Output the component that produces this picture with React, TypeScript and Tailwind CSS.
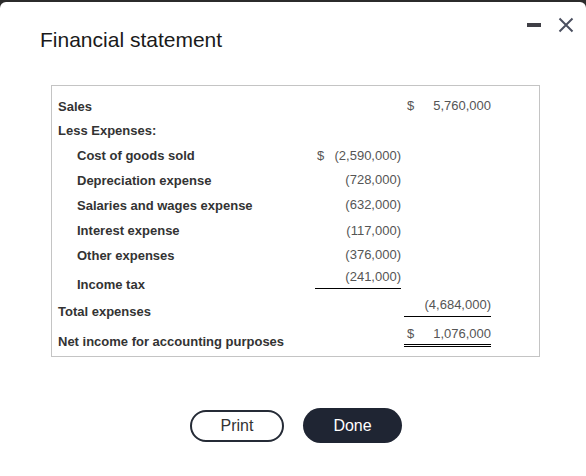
import React from "react";

type Row = {
  label: string;
  indent?: boolean;
  h: number;
  labelPt: number;
  c1?: React.ReactNode;
  c1Pt?: number;
  c1Under?: boolean;
  c2?: React.ReactNode;
  c2Pt?: number;
  c2Under?: "single" | "double";
};

function Num({ dollar, value }: { dollar?: boolean; value: string }) {
  return (
    <div className="flex justify-between">
      <span>{dollar ? "$" : ""}</span>
      <span>{value}</span>
    </div>
  );
}

const rows: Row[] = [
  { label: "Sales", h: 24, labelPt: 0, c2: <Num dollar value="5,760,000" />, c2Pt: -1 },
  { label: "Less Expenses:", h: 25, labelPt: 0 },
  { label: "Cost of goods sold", indent: true, h: 25, labelPt: 0, c1: <Num dollar value="(2,590,000)" />, c1Pt: 0 },
  { label: "Depreciation expense", indent: true, h: 25, labelPt: 0, c1: <Num value="(728,000)" />, c1Pt: -1 },
  { label: "Salaries and wages expense", indent: true, h: 25, labelPt: 0, c1: <Num value="(632,000)" />, c1Pt: -1 },
  { label: "Interest expense", indent: true, h: 25, labelPt: 0, c1: <Num value="(117,000)" />, c1Pt: 0 },
  { label: "Other expenses", indent: true, h: 21, labelPt: 0, c1: <Num value="(376,000)" />, c1Pt: -1 },
  { label: "Income tax", indent: true, h: 28, labelPt: 8, c1: <Num value="(241,000)" />, c1Pt: 0, c1Under: true },
  { label: "Total expenses", h: 29, labelPt: 7, c2: <Num value="(4,684,000)" />, c2Pt: 0, c2Under: "single" },
  { label: "Net income for accounting purposes", h: 30, labelPt: 8, c2: <Num dollar value="1,076,000" />, c2Pt: 0, c2Under: "double" },
];

export default function App() {
  return (
    <div
      className="w-[586px] h-[476px] bg-[#2b2b2b] pt-[2px] overflow-hidden"
      style={{ fontFamily: '"Liberation Sans", Arial, sans-serif' }}
    >
      <div className="bg-white rounded-[6px] h-[480px]">
        <div className="flex justify-between items-start pt-[15px] pl-[40px] pr-[12px]">
          <h1 className="mt-[11px] text-[21px] leading-[24px] text-[#1a1a1a] font-normal">
            Financial statement
          </h1>
          <div className="flex items-center gap-[17px] h-[16px]">
            <div className="w-[14px] h-[4px] bg-[#3f3f46]" />
            <svg width="16" height="16" viewBox="0 0 16 16" fill="none">
              <path d="M1.5 1.5 L14.5 14.5 M14.5 1.5 L1.5 14.5" stroke="#4b5060" strokeWidth="2" />
            </svg>
          </div>
        </div>

        <div className="ml-[51px] mt-[33px] w-[489px] h-[272px] border border-[#c4c4c4] pt-[13px] pl-[6px] pr-[48px]">
          {rows.map((r, i) => (
            <div key={i} className="flex items-start text-[13px] leading-[15px]" style={{ height: r.h }}>
              <div
                className={`flex-1 font-bold text-[#333] ${r.indent ? "pl-[19px]" : ""}`}
                style={{ paddingTop: r.labelPt }}
              >
                {r.label}
              </div>
              <div className="w-[86px] text-[#555]" style={{ marginTop: r.c1Pt ?? 0 }}>
                {r.c1 ? (
                  <div className={r.c1Under ? "pb-[4px] border-b border-black pl-[2px]" : "pl-[2px]"}>{r.c1}</div>
                ) : null}
              </div>
              <div className="w-[3px]" />
              <div className="w-[87px] text-[#555]" style={{ marginTop: r.c2Pt ?? 0 }}>
                {r.c2 ? (
                  <div
                    className={
                      r.c2Under === "single"
                        ? "pb-[4px] border-b border-black pl-[3px]"
                        : r.c2Under === "double"
                        ? "pb-[3px] border-b-[3px] border-double border-black pl-[3px]"
                        : "pl-[3px]"
                    }
                  >
                    {r.c2}
                  </div>
                ) : null}
              </div>
            </div>
          ))}
        </div>

        <div className="flex justify-center items-center gap-[19px] pl-[6px] mt-[51px]">
          <button className="w-[94px] h-[32px] rounded-full border-2 border-[#252b36] bg-white text-[16px] text-[#333]">
            Print
          </button>
          <button className="w-[99px] h-[35px] rounded-full bg-[#1f2533] text-[16px] text-white">
            Done
          </button>
        </div>
      </div>
    </div>
  );
}
